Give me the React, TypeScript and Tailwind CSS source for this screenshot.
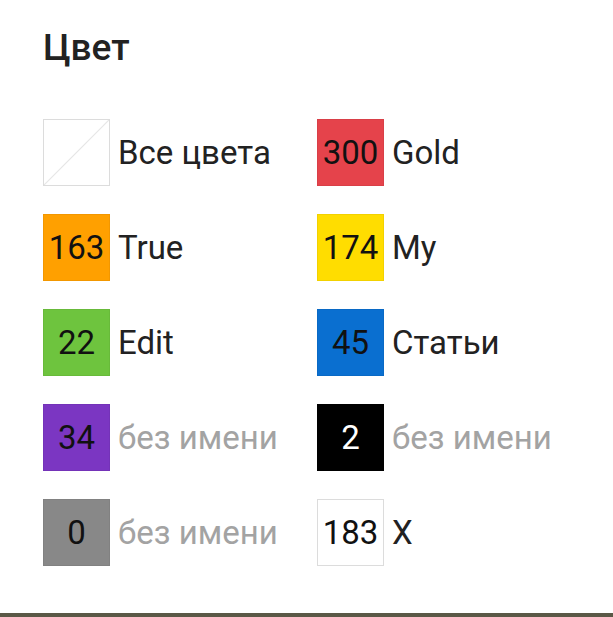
import React from "react";

type Item = { bg: string; num?: string; label: string; muted?: boolean; numWhite?: boolean; all?: boolean };

const items: Item[] = [
  { bg: "bg-white", label: "Все цвета", all: true },
  { bg: "bg-[#e5434b]", num: "300", label: "Gold" },
  { bg: "bg-[#ffa000]", num: "163", label: "True" },
  { bg: "bg-[#ffdd00]", num: "174", label: "My" },
  { bg: "bg-[#6ec43e]", num: "22", label: "Edit" },
  { bg: "bg-[#0a6fd0]", num: "45", label: "Статьи" },
  { bg: "bg-[#7b36c2]", num: "34", label: "без имени", muted: true },
  { bg: "bg-black", num: "2", label: "без имени", muted: true, numWhite: true },
  { bg: "bg-[#888888]", num: "0", label: "без имени", muted: true },
  { bg: "bg-white", num: "183", label: "X" },
];

function Swatch({ it }: { it: Item }) {
  const bordered = it.bg === "bg-white";
  return (
    <div
      className={`relative w-[67px] h-[67px] shrink-0 flex items-center justify-center ${it.bg} ${
        bordered ? "border border-[#dcdcdc]" : "border border-black/5"
      }`}
    >
      {it.all && (
        <svg className="absolute inset-0" width="100%" height="100%" viewBox="0 0 65 65" preserveAspectRatio="none">
          <line x1="0" y1="65" x2="65" y2="0" stroke="#e6e6e6" strokeWidth="1.2" />
        </svg>
      )}
      {it.num && (
        <span className={`text-[33px] leading-none ${it.numWhite ? "text-white" : "text-[#111]"}`}>{it.num}</span>
      )}
    </div>
  );
}

export default function App() {
  return (
    <div className="min-h-screen bg-[#5a5846]" style={{ fontFamily: "Roboto, 'Noto Sans', sans-serif" }}>
      <div className="h-[613px] bg-white pl-[43px] pt-[27px]">
        <h2 className="text-[37px] leading-[42px] font-medium text-[#222]">Цвет</h2>
        <div className="mt-[50px] grid grid-cols-[274px_274px] gap-y-[28px]">
          {items.map((it, i) => (
            <div key={i} className="flex items-center gap-[8px] h-[67px]">
              <Swatch it={it} />
              <span className={`text-[33px] leading-none ${it.muted ? "text-[#a3a3a3]" : "text-[#222]"}`}>
                {it.label}
              </span>
            </div>
          ))}
        </div>
      </div>
    </div>
  );
}
